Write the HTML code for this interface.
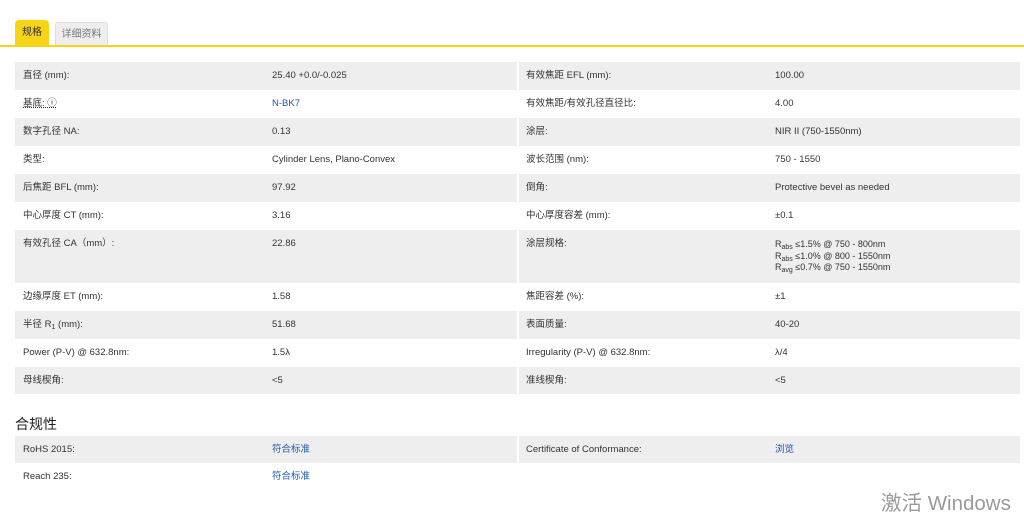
<!DOCTYPE html>
<html><head><meta charset="utf-8"><style>
body{margin:0;width:1024px;height:512px;background:#fff;font-family:"Liberation Sans","Noto Sans CJK SC",sans-serif;font-size:9.5px;color:#333;position:relative;overflow:hidden}
.tab{position:absolute;font-size:10px;text-align:center;box-sizing:border-box}
.t1{left:15px;top:20px;width:34px;height:26px;background:#f7d417;border-radius:4px 4px 0 0;line-height:26px;color:#333}
.t2{left:55px;top:22px;width:53px;height:24px;background:#eeeeee;border:1px solid #ddd;border-bottom:none;border-radius:3px 3px 0 0;line-height:23px;color:#777}
.line{position:absolute;left:0;top:45px;width:1024px;height:2px;background:#f7d417}
.tbl{position:absolute;left:15px;width:1005px}
.r{position:relative;height:28px}
.r.g{background:#eeeeee}
.r span{position:absolute;top:8px;line-height:12px}
.a{left:8px}.b{left:257px}.c{left:511px}.d{left:760px}
.r .sep{position:absolute;left:502px;top:0;bottom:0;width:2px;background:#fff}
.lk{color:#1f57a6}
sub{font-size:7px;vertical-align:-2px;line-height:0}
h3{position:absolute;left:15px;top:414px;margin:0;font-size:14px;font-weight:normal;color:#222}
.wm{position:absolute;left:881px;top:486px;font-size:20.5px;color:#9a9a9a}
</style></head><body>
<div class="tab t1">规格</div><div class="tab t2">详细资料</div><div class="line"></div>
<div class="tbl" style="top:62px">
<div class="r g"><div class="sep"></div><span class="a">直径 (mm):</span><span class="b">25.40 +0.0/-0.025</span><span class="c">有效焦距 EFL (mm):</span><span class="d">100.00</span></div>
<div class="r"><div class="sep"></div><span class="a" style="text-decoration:underline dotted">基底: ⓘ</span><span class="b lk">N-BK7</span><span class="c">有效焦距/有效孔径直径比:</span><span class="d">4.00</span></div>
<div class="r g"><div class="sep"></div><span class="a">数字孔径 NA:</span><span class="b">0.13</span><span class="c">涂层:</span><span class="d">NIR II (750-1550nm)</span></div>
<div class="r"><div class="sep"></div><span class="a">类型:</span><span class="b">Cylinder Lens, Plano-Convex</span><span class="c">波长范围 (nm):</span><span class="d">750 - 1550</span></div>
<div class="r g"><div class="sep"></div><span class="a">后焦距 BFL (mm):</span><span class="b">97.92</span><span class="c">倒角:</span><span class="d">Protective bevel as needed</span></div>
<div class="r"><div class="sep"></div><span class="a">中心厚度 CT (mm):</span><span class="b">3.16</span><span class="c">中心厚度容差 (mm):</span><span class="d">±0.1</span></div>
<div class="r g" style="height:53px"><div class="sep"></div><span class="a">有效孔径 CA（mm）:</span><span class="b">22.86</span><span class="c">涂层规格:</span><span class="d" style="font-size:9px;line-height:11.5px;top:9px">R<sub>abs</sub> ≤1.5% @ 750 - 800nm<br>R<sub>abs</sub> ≤1.0% @ 800 - 1550nm<br>R<sub>avg</sub> ≤0.7% @ 750 - 1550nm</span></div>
<div class="r"><div class="sep"></div><span class="a">边缘厚度 ET (mm):</span><span class="b">1.58</span><span class="c">焦距容差 (%):</span><span class="d">±1</span></div>
<div class="r g"><div class="sep"></div><span class="a">半径 R<sub>1</sub> (mm):</span><span class="b">51.68</span><span class="c">表面质量:</span><span class="d">40-20</span></div>
<div class="r"><div class="sep"></div><span class="a">Power (P-V) @ 632.8nm:</span><span class="b">1.5λ</span><span class="c">Irregularity (P-V) @ 632.8nm:</span><span class="d">λ/4</span></div>
<div class="r g" style="height:27px"><div class="sep"></div><span class="a">母线楔角:</span><span class="b">&lt;5</span><span class="c">准线楔角:</span><span class="d">&lt;5</span></div>
</div>
<h3>合规性</h3>
<div class="tbl" style="top:436px">
<div class="r g" style="height:27px"><div class="sep"></div><span class="a">RoHS 2015:</span><span class="b lk">符合标准</span><span class="c">Certificate of Conformance:</span><span class="d lk">浏览</span></div>
<div class="r"><span class="a">Reach 235:</span><span class="b lk">符合标准</span></div>
</div>
<div class="wm">激活 Windows</div>
</body></html>
